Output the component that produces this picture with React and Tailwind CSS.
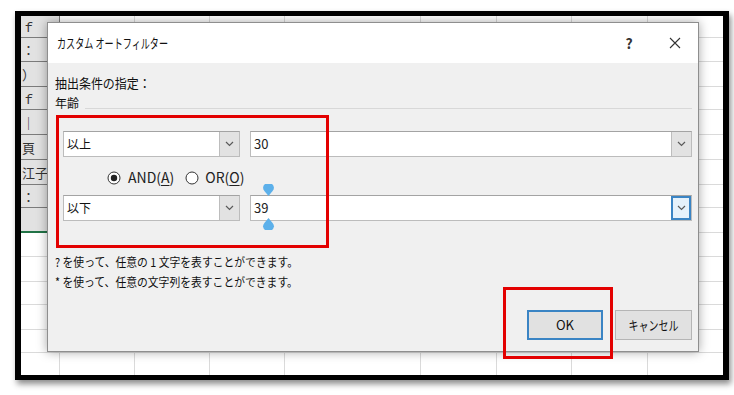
import React from 'react';

const JP = "font-['Noto_Sans_CJK_JP','Liberation_Sans',sans-serif]";

// spreadsheet row heights / column widths behind the dialog
const ROW_H = ['h-[22px]', 'h-[24px]', 'h-[25px]', 'h-[23px]', 'h-[25px]', 'h-[25px]', 'h-[25px]', 'h-[23px]', 'h-[25px]', 'h-[24px]', 'h-[25px]', 'h-[23px]', 'h-[25px]', 'h-[23px]', 'h-[30px]'];
const COL_W = ['w-[39px]', 'w-[75px]', 'w-[75px]', 'w-[75px]', 'w-[136px]', 'w-[76px]', 'w-[75px]', 'w-[76px]', 'w-[75px]'];
const LEFT_TEXT = ['ｆ', '：', '）', 'ｆ', '｜', '頁', '江子', '：', ''];

const Sheet = () => (
  <div className="flex h-full flex-col overflow-hidden">
    {ROW_H.map((h, r) => (
      <div key={r} className={`flex shrink-0 ${h}`}>
        {COL_W.map((w, c) => {
          let cls = 'border-b border-r border-[#dadada] bg-white';
          if (c === 0 && r <= 8) {
            cls = r === 8
              ? 'border-r border-[#9a9a9a] bg-[#e2e2e2] border-b-2 border-b-[#217346]'
              : 'border-b border-r border-[#7c7c7c] bg-[#e2e2e2]';
          }
          if (c === COL_W.length - 1) cls = cls.replace('border-r ', '');
          return (
            <div key={c} className={`flex shrink-0 items-center overflow-hidden ${w} ${cls}`}>
              {c === 0 && r <= 8 && (
                <span className={`pl-[1px] text-[13px] leading-none text-[#333] ${JP}`}>{LEFT_TEXT[r]}</span>
              )}
            </div>
          );
        })}
      </div>
    ))}
  </div>
);

const Chevron = () => (
  <svg width="9" height="6" viewBox="0 0 9 6">
    <path d="M1 1l3.5 3.5L8 1" fill="none" stroke="#5a5a5a" strokeWidth="1.2" />
  </svg>
);

const DropButton = ({ active }) => (
  <div
    className={`flex h-full w-[20px] shrink-0 items-center justify-center ${
      active ? 'border-2 border-[#3a84c4] bg-[#e5f1fb]' : 'border-l border-[#bdbdbd] bg-[#e2e2e2]'
    }`}
  >
    <Chevron />
  </div>
);

const Combo = ({ value }) => (
  <div className="flex h-[26px] w-[177px] shrink-0 items-center border border-[#bcbcbc] border-t-[#a3a3a3] bg-white">
    <span className="flex-1 pl-[3px] text-[12px] text-[#111]">{value}</span>
    <DropButton />
  </div>
);

// touch selection handles round the caret
const Handle = ({ up }) => (
  <svg width="13" height="12" viewBox="0 0 13 12">
    {up ? (
      <path d="M6.5 0L10.6 5A5.2 5.2 0 1 1 2.4 5z" fill="#5cb0ea" />
    ) : (
      <path d="M6.5 12L10.6 7A5.2 5.2 0 1 0 2.4 7z" fill="#5cb0ea" />
    )}
  </svg>
);

const ValueBox = ({ value, active, handles }) => (
  <div className="relative flex h-[26px] flex-1 items-center border border-[#bcbcbc] border-t-[#a3a3a3] bg-white">
    <span className="flex-1 pl-[3px] text-[13px] text-[#222]">{value}</span>
    <DropButton active={active} />
    {handles && (
      <>
        <div className="absolute left-[11px] top-[-12px]"><Handle /></div>
        <div className="absolute left-[11px] top-[22px]"><Handle up /></div>
      </>
    )}
  </div>
);

const Radio = ({ checked }) => (
  <svg width="14" height="14" viewBox="0 0 14 14">
    <circle cx="7" cy="7" r="6" fill="#fff" stroke="#333" strokeWidth="1" />
    {checked && <circle cx="7" cy="7" r="3.2" fill="#222" />}
  </svg>
);

const Dialog = () => (
  <div className={`absolute left-[26px] top-[6px] flex h-[330px] w-[652px] flex-col border border-[#8e8e8e] bg-[#f0f0f0] shadow-[0_0_10px_rgba(0,0,0,0.35)] ${JP}`}>
    {/* title bar */}
    <div className="flex h-[40px] shrink-0 items-center bg-white">
      <span className="ml-[9px] inline-block origin-left scale-x-[.7] whitespace-nowrap text-[13px] text-[#111]">
        カスタム オートフィルター
      </span>
      <span className="ml-auto flex w-[46px] justify-center text-[14px] font-bold text-[#333]">?</span>
      <span className="flex w-[46px] justify-center">
        <svg width="12" height="12" viewBox="0 0 12 12">
          <path d="M1 1l10 10M11 1L1 11" stroke="#333" strokeWidth="1.1" />
        </svg>
      </span>
    </div>

    {/* body */}
    <div className="flex flex-1 flex-col pl-[7px] pr-[6px] pt-[10px]">
      <div className="flex h-[20px] items-center">
        <span className="inline-block origin-left scale-x-[.92] whitespace-nowrap text-[13px] text-[#111]">抽出条件の指定：</span>
      </div>
      <div className="flex h-[20px] items-center">
        <span className="text-[12px] text-[#111]">年齢</span>
        <div className="ml-[6px] mt-[10px] h-px flex-1 bg-[#d8d8d8]" />
      </div>

      <div className="ml-[8px] mt-[18px] flex gap-[10px]">
        <Combo value="以上" />
        <ValueBox value="30" />
      </div>

      <div className="ml-[52px] flex h-[38px] items-center pt-[3px] text-[14px] text-[#222]">
        <Radio checked />
        <span className="ml-[7px]">AND(<span className="underline underline-offset-2">A</span>)</span>
        <span className="ml-[11px]"><Radio /></span>
        <span className="ml-[6px]">OR(<span className="underline underline-offset-2">O</span>)</span>
      </div>

      <div className="ml-[8px] flex gap-[10px]">
        <Combo value="以下" />
        <ValueBox value="39" active handles />
      </div>

      <div className="mt-[31px] flex h-[20px] items-center">
        <span className="inline-block origin-left scale-x-[.9] whitespace-nowrap text-[12px] text-[#111]">
          ? を使って、任意の 1 文字を表すことができます。
        </span>
      </div>
      <div className="flex h-[20px] items-center">
        <span className="inline-block origin-left scale-x-[.9] whitespace-nowrap text-[12px] text-[#111]">
          * を使って、任意の文字列を表すことができます。
        </span>
      </div>

      <div className="mt-[18px] flex justify-end gap-[12px]">
        <button className="flex h-[30px] w-[76px] items-center justify-center border-2 border-[#3a84c4] bg-[#e1e1e1] text-[13px] text-[#111]">
          OK
        </button>
        <button className="flex h-[30px] w-[77px] items-center justify-center border border-[#b5b5b5] bg-[#e1e1e1] text-[13px] text-[#111]">
          <span className="inline-block scale-x-[.77] whitespace-nowrap">キャンセル</span>
        </button>
      </div>
    </div>

    {/* red highlight boxes */}
    <div className="pointer-events-none absolute left-[8px] top-[92px] h-[133px] w-[273px] border-[3px] border-[#e30000]" />
    <div className="pointer-events-none absolute left-[455px] top-[264px] h-[72px] w-[110px] border-[3px] border-[#e30000]" />
  </div>
);

export default function App() {
  return (
    <div className="h-[395px] w-[734px] overflow-hidden bg-white pl-[15px] pt-[11px]">
      <div className="relative h-[369px] w-[714px] border-x-[6px] border-y-[5px] border-black shadow-[2px_4px_6px_rgba(0,0,0,0.45)]">
        <Sheet />
        <Dialog />
      </div>
    </div>
  );
}
